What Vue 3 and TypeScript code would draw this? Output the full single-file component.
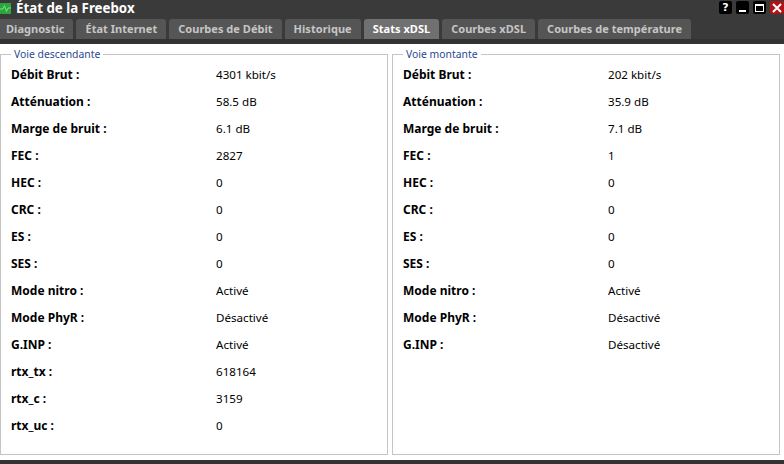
<script setup lang="ts">
interface Row {
  label: string
  value: string
}

const tabs: string[] = [
  'Diagnostic',
  'État Internet',
  'Courbes de Débit',
  'Historique',
  'Stats xDSL',
  'Courbes xDSL',
  'Courbes de température',
]
const activeTab = 'Stats xDSL'

const down: Row[] = [
  { label: 'Débit Brut :', value: '4301 kbit/s' },
  { label: 'Atténuation :', value: '58.5 dB' },
  { label: 'Marge de bruit :', value: '6.1 dB' },
  { label: 'FEC :', value: '2827' },
  { label: 'HEC :', value: '0' },
  { label: 'CRC :', value: '0' },
  { label: 'ES :', value: '0' },
  { label: 'SES :', value: '0' },
  { label: 'Mode nitro :', value: 'Activé' },
  { label: 'Mode PhyR :', value: 'Désactivé' },
  { label: 'G.INP :', value: 'Activé' },
  { label: 'rtx_tx :', value: '618164' },
  { label: 'rtx_c :', value: '3159' },
  { label: 'rtx_uc :', value: '0' },
]

const up: Row[] = [
  { label: 'Débit Brut :', value: '202 kbit/s' },
  { label: 'Atténuation :', value: '35.9 dB' },
  { label: 'Marge de bruit :', value: '7.1 dB' },
  { label: 'FEC :', value: '1' },
  { label: 'HEC :', value: '0' },
  { label: 'CRC :', value: '0' },
  { label: 'ES :', value: '0' },
  { label: 'SES :', value: '0' },
  { label: 'Mode nitro :', value: 'Activé' },
  { label: 'Mode PhyR :', value: 'Désactivé' },
  { label: 'G.INP :', value: 'Désactivé' },
]

const panels = [
  { title: 'Voie descendante', rows: down },
  { title: 'Voie montante', rows: up },
]
</script>

<template>
  <div class="window">
    <div class="titlebar">
      <svg class="app-icon" width="11" height="11" viewBox="0 0 11 11">
        <rect width="11" height="11" fill="#2aa63a" />
        <path d="M0 6h3l1.5-3.5 2 6L8 5h3" fill="none" stroke="#7fe08a" stroke-width="1" />
      </svg>
      <span class="title">État de la Freebox</span>
      <div class="controls">
        <span class="ctl">?</span>
        <span class="ctl"><i class="min"></i></span>
        <span class="ctl"><i class="max"></i></span>
        <span class="ctl close">
          <svg width="10" height="10" viewBox="0 0 10 10">
            <path d="M1 1l8 8M9 1l-8 8" stroke="#fff" stroke-width="2" />
          </svg>
        </span>
      </div>
    </div>
    <div class="tabs">
      <div v-for="t in tabs" :key="t" class="tab" :class="{ active: t === activeTab }">{{ t }}</div>
    </div>
    <div class="body">
      <fieldset v-for="p in panels" :key="p.title" class="panel">
        <legend>{{ p.title }}</legend>
        <div v-for="r in p.rows" :key="r.label" class="row">
          <span class="label">{{ r.label }}</span>
          <span class="value">{{ r.value }}</span>
        </div>
      </fieldset>
    </div>
  </div>
</template>

<style>
html,
body {
  margin: 0;
  background: #fff;
}
</style>

<style scoped>
.window {
  width: 784px;
  height: 464px;
  display: flex;
  flex-direction: column;
  overflow: hidden;
  font-family: "Noto Sans", sans-serif;
  font-size: 11.6px;
  color: #000;
}

.titlebar {
  height: 19px;
  flex: none;
  display: flex;
  align-items: flex-start;
  background: #3a3a3a;
  padding: 2px 0 0 0;
  box-sizing: border-box;
}

.app-icon {
  flex: none;
  margin-top: 1px;
}

.title {
  margin-left: 5px;
  margin-top: -2px;
  font-family: "Noto Sans", sans-serif;
  font-weight: 700;
  font-size: 13.3px;
  line-height: 17px;
  color: #fff;
}

.controls {
  margin-left: auto;
  margin-top: -1px;
  display: flex;
  gap: 4px;
}

.ctl {
  width: 13px;
  height: 13px;
  background: #000;
  border-radius: 2px;
  color: #fff;
  font-family: "DejaVu Sans", sans-serif;
  font-weight: 700;
  font-size: 11px;
  display: flex;
  align-items: center;
  justify-content: center;
}

.close {
  width: 14px;
  background: #b01217;
}

.min {
  display: block;
  width: 7px;
  height: 2px;
  background: #fff;
  margin-top: 6px;
}

.max {
  display: block;
  width: 7px;
  height: 5px;
  border: 1px solid #fff;
  border-top-width: 2px;
}

.tabs {
  height: 25px;
  flex: none;
  display: flex;
  gap: 3px;
  margin-left: -3px;
  background: #3a3a3a;
  border-bottom: 5px solid #333;
  box-sizing: border-box;
}

.tab {
  height: 20px;
  box-sizing: border-box;
  padding: 0 9px;
  background: #555;
  border-radius: 3px 3px 0 0;
  font-family: "Noto Sans", sans-serif;
  font-weight: 700;
  font-size: 11px;
  letter-spacing: 0.03px;
  line-height: 20px;
  color: #c6c6c6;
  white-space: nowrap;
}

.active {
  background: #707070;
  color: #fff;
}

.body {
  flex: 1;
  display: flex;
  gap: 4px;
  padding: 4px 4px 5px 0;
  background: #fff;
  border-bottom: 4px solid #333;
  box-sizing: border-box;
  min-height: 0;
}

.panel {
  flex: 1;
  min-width: 0;
  margin: 0;
  padding: 0 0 0 10px;
  border: 1px solid #c4c4c4;
}

.panel legend {
  margin-left: 0;
  padding: 0 3px;
  font-size: 10.4px;
  line-height: 13px;
  color: #2a4a90;
}

.row {
  display: flex;
  height: 27px;
  align-items: center;
}

.label {
  width: 205px;
  flex: none;
  font-size: 12px;
  font-weight: 700;
}

.value {
  margin-top: -1px;
}
</style>
